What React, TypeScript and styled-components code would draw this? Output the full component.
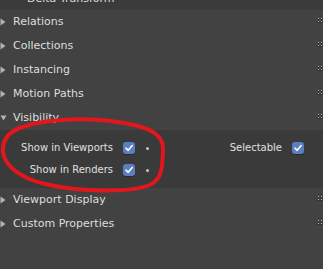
import React from "react";
import styled, { createGlobalStyle } from "styled-components";

const Global = createGlobalStyle`
  html, body { margin: 0; padding: 0; background: #424242; overflow: hidden; }
  body { font-family: "DejaVu Sans", "Liberation Sans", sans-serif; font-size: 11px; color: #dcdcdc; }
`;

const Page = styled.div`
  position: relative;
  width: 323px;
  height: 269px;
  background: #424242;
  overflow: hidden;
`;

const TopStrip = styled.div`
  height: 10px;
  background: #3b3b3b;
  display: flex;
  align-items: flex-end;
  padding: 0 0 5px 27px;
  box-sizing: border-box;
  overflow: hidden;
`;

const StripLabel = styled.span`
  line-height: 13px;
  white-space: nowrap;
  color: #dcdcdc;
`;

const Header = styled.div`
  height: 24px;
  display: flex;
  align-items: center;
  background: #424242;
  position: relative;
`;

const Arrow = styled.span`
  width: 13px;
  display: flex;
  align-items: center;
  flex: none;
`;

const HeaderLabel = styled.span`
  flex: 1;
  line-height: 14px;
  color: #dedede;
  white-space: nowrap;
`;

const Grip = styled.svg`
  flex: none;
  margin-right: 1px;
  margin-top: -3px;
`;

const Content = styled.div`
  background: #3a3a3a;
  padding: 7px 0;
  display: grid;
  grid-template-columns: 162px 1fr;
`;

const Column = styled.div`
  display: flex;
  flex-direction: column;
`;

const Row = styled.div<{ $labelEnd: number; $trail: number }>`
  height: 22px;
  display: grid;
  grid-template-columns: ${(p) => p.$labelEnd}px 10px 12px ${(p) => p.$trail}px;
  align-items: center;
`;

const RowLabel = styled.span`
  grid-column: 1;
  text-align: right;
  white-space: nowrap;
  color: #e0e0e0;
  font-size: 10px;
  line-height: 13px;
  margin-top: -1px;
`;

const Check = styled.span`
  grid-column: 3;
  width: 12px;
  height: 12px;
  border-radius: 3px;
  background: #5a7fc0;
  display: flex;
  align-items: center;
  justify-content: center;
  box-shadow: 0 1px 0 rgba(0,0,0,0.25);
`;

const DotCell = styled.span`
  grid-column: 4;
  display: flex;
  align-items: center;
  padding-left: 11px;
`;

const Dot = styled.span`
  width: 3px;
  height: 3px;
  border-radius: 50%;
  background: #c4c4c4;
`;

const Overlay = styled.svg`
  position: absolute;
  left: 0;
  top: 0;
  pointer-events: none;
`;

const RightTri = () => (
  <svg width="6" height="8" viewBox="0 0 6 8">
    <path d="M0.5 0.5 L5.5 4 L0.5 7.5 Z" fill="#b4b4b4" />
  </svg>
);

const DownTri = () => (
  <svg width="7" height="6" viewBox="0 0 7 6">
    <path d="M0.5 0.5 L6.5 0.5 L3.5 5.5 Z" fill="#b4b4b4" />
  </svg>
);

const GripIcon = () => (
  <Grip width="4" height="6" viewBox="0 0 4 6">
    <rect x="0" y="0" width="1" height="1" fill="#b0b0b0" />
    <rect x="3" y="0" width="1" height="1" fill="#b0b0b0" />
    <rect x="0" y="1" width="1" height="1" fill="#1e1e1e" />
    <rect x="3" y="1" width="1" height="1" fill="#1e1e1e" />
    <rect x="0" y="3" width="1" height="1" fill="#b0b0b0" />
    <rect x="3" y="3" width="1" height="1" fill="#b0b0b0" />
    <rect x="0" y="4" width="1" height="1" fill="#1e1e1e" />
    <rect x="3" y="4" width="1" height="1" fill="#1e1e1e" />
  </Grip>
);

const CheckMark = () => (
  <svg width="10" height="10" viewBox="0 0 10 10">
    <path d="M2 5.2 L4.2 7.3 L8.2 2.6" fill="none" stroke="#ffffff" strokeWidth="1.6" strokeLinecap="round" strokeLinejoin="round" />
  </svg>
);

const PanelHeader = ({ label, open }: { label: string; open?: boolean }) => (
  <Header>
    <Arrow>{open ? <DownTri /> : <RightTri />}</Arrow>
    <HeaderLabel>{label}</HeaderLabel>
    <GripIcon />
  </Header>
);

const CheckRow = ({ label, labelEnd, trail, dot }: { label: string; labelEnd: number; trail: number; dot?: boolean }) => (
  <Row $labelEnd={labelEnd} $trail={trail}>
    <RowLabel>{label}</RowLabel>
    <Check><CheckMark /></Check>
    {dot && (
      <DotCell>
        <Dot />
      </DotCell>
    )}
  </Row>
);

export default function App() {
  return (
    <Page>
      <Global />
      <TopStrip>
        <StripLabel>Delta Transform</StripLabel>
      </TopStrip>
      <PanelHeader label="Relations" />
      <PanelHeader label="Collections" />
      <PanelHeader label="Instancing" />
      <PanelHeader label="Motion Paths" />
      <PanelHeader label="Visibility" open />
      <Content>
        <Column>
          <CheckRow label="Show in Viewports" labelEnd={113} trail={27} dot />
          <CheckRow label="Show in Renders" labelEnd={113} trail={27} dot />
        </Column>
        <Column>
          <CheckRow label="Selectable" labelEnd={120} trail={19} />
        </Column>
      </Content>
      <PanelHeader label="Viewport Display" />
      <PanelHeader label="Custom Properties" />
      <Overlay width="323" height="269" viewBox="0 0 323 269">
        <path
          d="M20 128 C42 119, 95 115, 138 126 C157 131, 164 139, 163 152 C162 166, 163 178, 150 185 C130 193, 80 192, 45 184 C20 178, 5 166, 3 152 C2 141, 8 132, 22 127"
          fill="none"
          stroke="#e3161c"
          strokeWidth="4"
          strokeLinecap="round"
          strokeLinejoin="round"
        />
      </Overlay>
    </Page>
  );
}
